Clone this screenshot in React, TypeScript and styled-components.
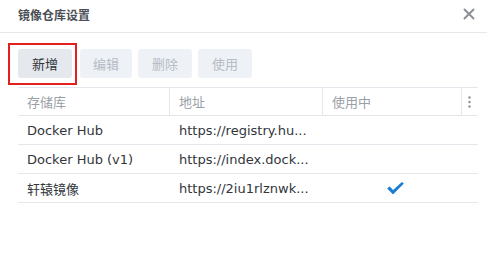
import React from "react";
import styled, { createGlobalStyle } from "styled-components";

interface Registry {
  name: string;
  url: string;
  inUse: boolean;
}

// urls are shown shortened, as the list does
const registries: Registry[] = [
  { name: "Docker Hub", url: "https://registry.hu...", inUse: false },
  { name: "Docker Hub (v1)", url: "https://index.dock...", inUse: false },
  { name: "轩辕镜像", url: "https://2iu1rlznwk...", inUse: true },
];

const GlobalStyle = createGlobalStyle`
  html, body {
    margin: 0;
    padding: 0;
    background: #ffffff;
  }
  body {
    font-family: "DejaVu Sans", "Noto Sans CJK SC", sans-serif;
    font-size: 13px;
    color: #333;
  }
`;

const Dialog = styled.div`
  position: relative;
  width: 487px;
  height: 264px;
  background: #fff;
  overflow: hidden;
`;

const Header = styled.div`
  height: 32px;
  display: flex;
  align-items: center;
  justify-content: space-between;
  padding: 0 12px 0 18px;
  border-bottom: 1px solid #e6e8eb;
`;

const Title = styled.div`
  font-family: "Noto Sans CJK SC", sans-serif;
  font-size: 12px;
  font-weight: 700;
  color: #4a4f55;
  margin-top: -4px;
`;

const CloseButton = styled.button`
  border: 0;
  background: none;
  padding: 0;
  width: 12px;
  height: 12px;
  display: flex;
  margin-top: -4px;
  cursor: pointer;
`;

const Toolbar = styled.div`
  display: flex;
  gap: 6px;
  padding: 16px 18px 0;
`;

const ToolButton = styled.button<{ $disabled?: boolean; $width?: number }>`
  width: ${(p) => p.$width ?? 54}px;
  height: 29px;
  border: 0;
  border-radius: 3px;
  background: ${(p) => (p.$disabled ? "#eef1f5" : "#e5e9ee")};
  color: ${(p) => (p.$disabled ? "#b5bcc5" : "#2f3338")};
  font-family: "Noto Sans CJK SC", sans-serif;
  font-size: 13px;
  padding: 0;
  &:first-child {
    margin-right: 2px;
  }
`;

const Highlight = styled.div`
  position: absolute;
  left: 8px;
  top: 43px;
  width: 65px;
  height: 38px;
  border: 2px solid #e3201c;
  pointer-events: none;
`;

const Table = styled.div`
  margin: 9px 9px 0 18px;
  border-top: 1px solid #e3e6ea;
`;

const Row = styled.div<{ $head?: boolean }>`
  display: grid;
  grid-template-columns: 152px 153px 139px 16px;
  height: ${(p) => (p.$head ? 27 : 28)}px;
  border-bottom: 1px solid #e3e6ea;
  color: ${(p) => (p.$head ? "#9aa0a7" : "#32363b")};
`;

const Cell = styled.div<{ $divider?: boolean; $center?: boolean }>`
  display: flex;
  align-items: center;
  justify-content: ${(p) => (p.$center ? "center" : "flex-start")};
  padding: 0 9px;
  border-right: ${(p) => (p.$divider ? "1px solid #e3e6ea" : "0")};
  min-width: 0;
  white-space: nowrap;
`;

const CjkText = styled.span`
  font-family: "Noto Sans CJK SC", sans-serif;
`;

const CheckWrap = styled.span`
  display: flex;
  margin-left: 5px;
`;

const MenuCell = styled.div`
  display: flex;
  align-items: center;
  justify-content: center;
  padding-right: 1px;
`;

function CloseIcon() {
  return (
    <svg width="12" height="12" viewBox="0 0 12 12">
      <path d="M1.5 1.5 L10.5 10.5 M10.5 1.5 L1.5 10.5" stroke="#8c9096" strokeWidth="2" strokeLinecap="round" />
    </svg>
  );
}

function Check() {
  return (
    <svg width="17" height="13" viewBox="0 0 17 13">
      <path d="M1 6.5 L6 11.5 L16 1.5 L15 0.8 L6 9 L2.6 5.2 Z" fill="#1b7ed2" stroke="#1b7ed2" strokeWidth="1.2" strokeLinejoin="round" />
    </svg>
  );
}

function Dots() {
  return (
    <svg width="3" height="12" viewBox="0 0 3 12">
      <circle cx="1.5" cy="1.5" r="1.2" fill="#8c9096" />
      <circle cx="1.5" cy="6" r="1.2" fill="#8c9096" />
      <circle cx="1.5" cy="10.5" r="1.2" fill="#8c9096" />
    </svg>
  );
}

export default function App() {
  return (
    <Dialog>
      <GlobalStyle />
      <Header>
        <Title>镜像仓库设置</Title>
        <CloseButton>
          <CloseIcon />
        </CloseButton>
      </Header>
      <Toolbar>
        <ToolButton>新增</ToolButton>
        <ToolButton $disabled $width={52}>编辑</ToolButton>
        <ToolButton $disabled>删除</ToolButton>
        <ToolButton $disabled>使用</ToolButton>
      </Toolbar>
      <Highlight />
      <Table>
        <Row $head>
          <Cell $divider>
            <CjkText>存储库</CjkText>
          </Cell>
          <Cell $divider>
            <CjkText>地址</CjkText>
          </Cell>
          <Cell $divider>
            <CjkText>使用中</CjkText>
          </Cell>
          <MenuCell>
            <Dots />
          </MenuCell>
        </Row>
        {registries.map((r) => (
          <Row key={r.name}>
            <Cell>{r.name}</Cell>
            <Cell>{r.url}</Cell>
            <Cell $center>
              {r.inUse && (
                <CheckWrap>
                  <Check />
                </CheckWrap>
              )}
            </Cell>
            <MenuCell />
          </Row>
        ))}
      </Table>
    </Dialog>
  );
}
